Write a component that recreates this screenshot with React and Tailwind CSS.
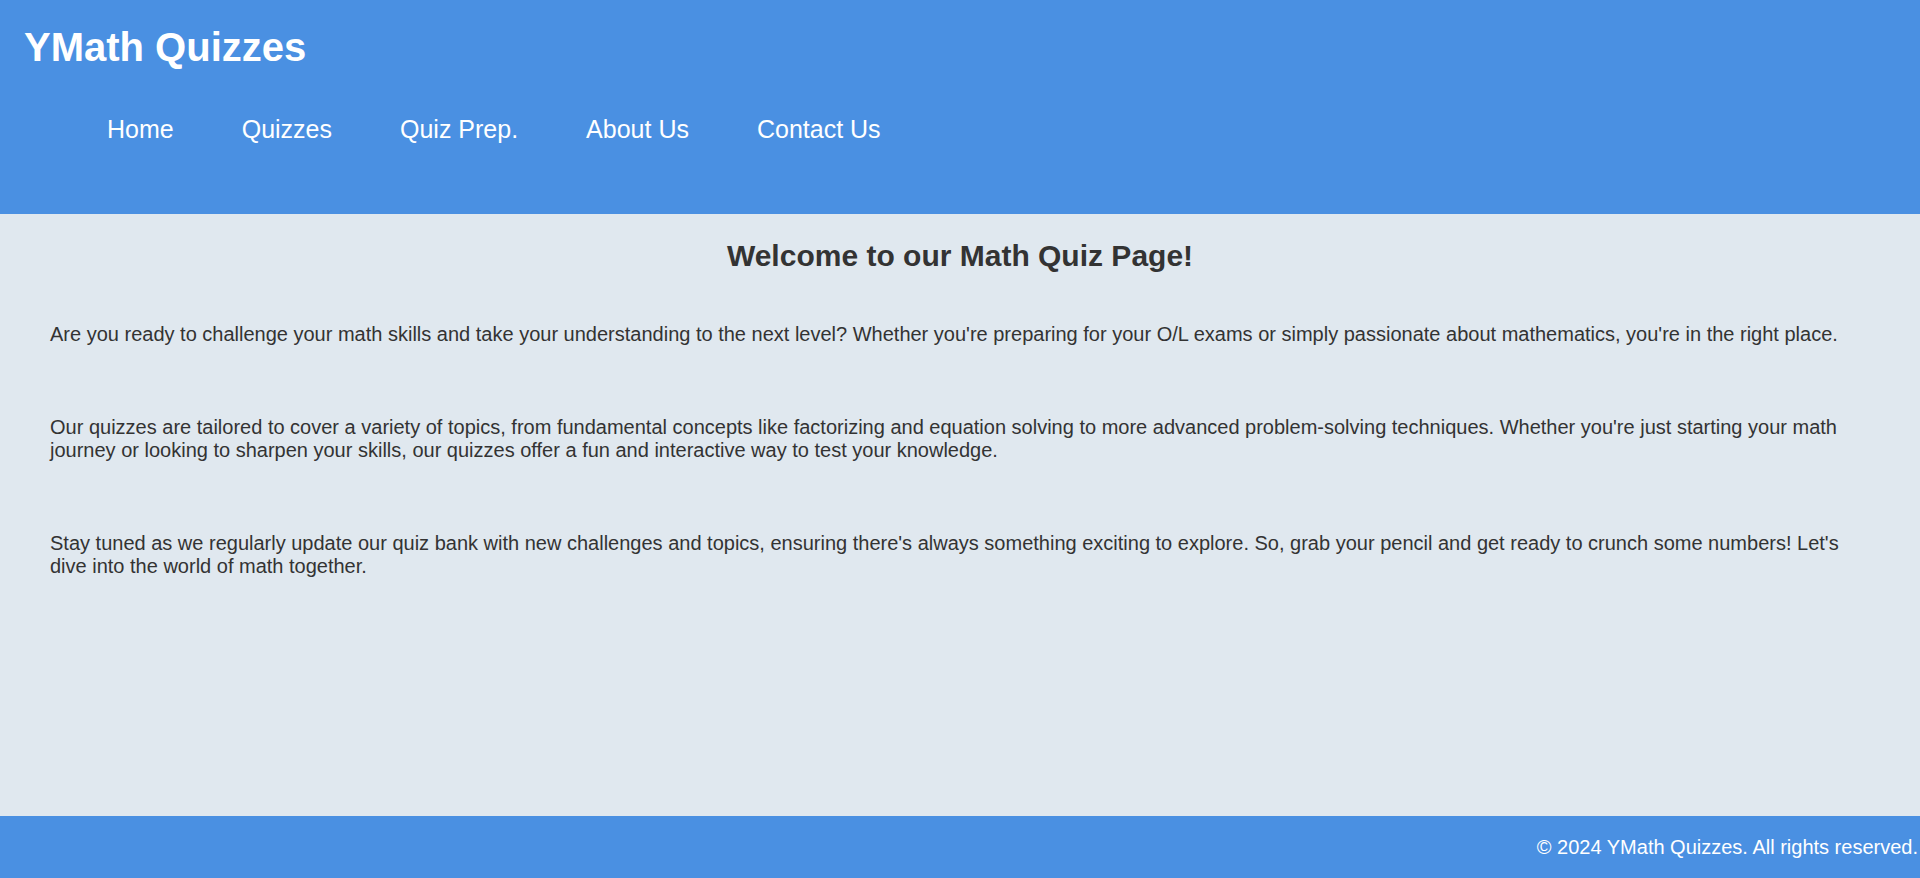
import React from "react";

const navItems = ["Home", "Quizzes", "Quiz Prep.", "About Us", "Contact Us"];

const paragraphs = [
  "Are you ready to challenge your math skills and take your understanding to the next level? Whether you're preparing for your O/L exams or simply passionate about mathematics, you're in the right place.",
  "Our quizzes are tailored to cover a variety of topics, from fundamental concepts like factorizing and equation solving to more advanced problem-solving techniques. Whether you're just starting your math journey or looking to sharpen your skills, our quizzes offer a fun and interactive way to test your knowledge.",
  "Stay tuned as we regularly update our quiz bank with new challenges and topics, ensuring there's always something exciting to explore. So, grab your pencil and get ready to crunch some numbers! Let's dive into the world of math together.",
];

const App = () => {
  return (
    <div
      className="flex flex-col min-h-screen bg-[#e0e8ef]"
      style={{ fontFamily: '"Liberation Sans", Arial, sans-serif' }}
    >
      {/* Header */}
      <header className="bg-[#4a90e2] text-white pt-[24px] pb-[70px] px-[24px]">
        <h1 className="text-[40px] leading-[46px] font-bold">YMath Quizzes</h1>
        <nav className="mt-[45px] pl-[83px]">
          <ul className="flex gap-[68px] text-[25px] leading-[29px]">
            {navItems.map((item) => (
              <li key={item}>
                <a href="#" className="text-white">
                  {item}
                </a>
              </li>
            ))}
          </ul>
        </nav>
      </header>

      {/* Main */}
      <main className="flex-1 px-[50px] pt-[24px] text-[#333333]">
        <h2 className="text-center text-[30px] leading-[35px] font-bold">
          Welcome to our Math Quiz Page!
        </h2>
        <div className="mt-[50px] flex flex-col gap-[70px]">
          {paragraphs.map((text, i) => (
            <p key={i} className="text-[20px] leading-[23px]">
              {text}
            </p>
          ))}
        </div>
      </main>

      {/* Footer */}
      <footer className="bg-[#4a90e2] text-white h-[62px] flex items-center justify-end pr-[2px]">
        <p className="text-[20px] leading-[23px]">© 2024 YMath Quizzes. All rights reserved.</p>
      </footer>
    </div>
  );
};

export default App;
